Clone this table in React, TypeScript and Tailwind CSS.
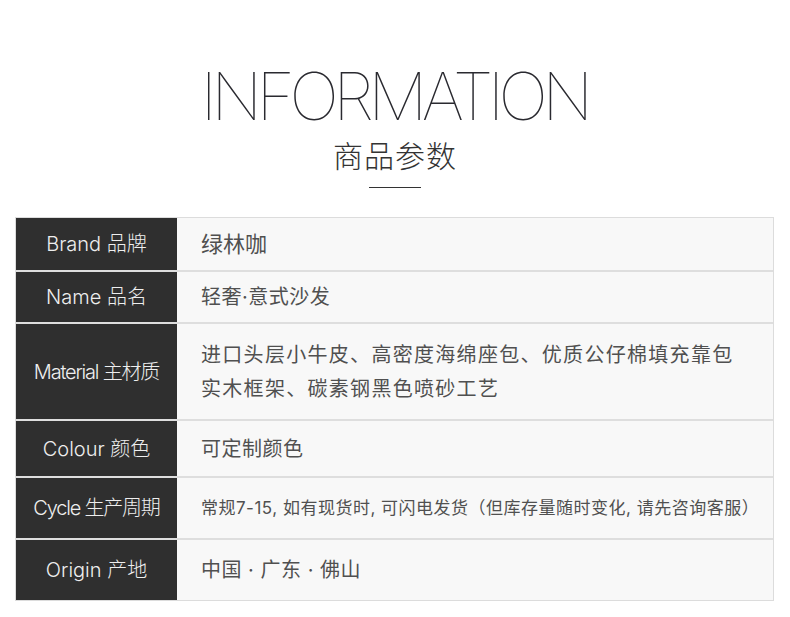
import React from "react";

interface Row {
  label: string;
  value: string[];
  h: string;
  labelClass?: string;
  valueClass?: string;
}

const rows: Row[] = [
  { label: "Brand 品牌", value: ["绿林咖"], h: "h-[52px]", valueClass: "text-[22px] text-[#2e2e2e]" },
  { label: "Name 品名", value: ["轻奢·意式沙发"], h: "h-[52px]" },
  {
    label: "Material 主材质",
    value: ["进口头层小牛皮、高密度海绵座包、优质公仔棉填充靠包", "实木框架、碳素钢黑色喷砂工艺"],
    h: "h-[97px]",
    labelClass: "tracking-[-1.2px]",
    valueClass: "text-[20px] tracking-[1.3px]",
  },
  { label: "Colour 颜色", value: ["可定制颜色"], h: "h-[57px]" },
  {
    label: "Cycle 生产周期",
    value: ["常规7-15, 如有现货时, 可闪电发货（但库存量随时变化, 请先咨询客服）"],
    h: "h-[62px]",
    labelClass: "tracking-[-1.2px]",
    valueClass: "text-[17px] tracking-[0.5px]",
  },
  { label: "Origin 产地", value: ["中国 · 广东 · 佛山"], h: "h-[62px]" },
];

const font = "font-['Inter','Noto_Sans_CJK_SC',sans-serif]";

export default function App() {
  return (
    <div className={`w-[790px] h-[617px] bg-white ${font} overflow-hidden`}>
      <div className="flex flex-col items-center pt-[63px]">
        <h1 className="text-[66px] font-thin leading-none text-[#2a2a30] tracking-[-5.6px] pr-[2px]">INFORMATION</h1>
        <div className="mt-[12px] text-[30px] font-light leading-none text-[#333] tracking-[1px]">商品参数</div>
        <div className="mt-[16px] w-[52px] h-px bg-[#333]" />
      </div>
      <div className="mx-[15px] mt-[29px] w-[759px] border border-[#dcdcdc]">
        {rows.map((r, i) => (
          <div
            key={r.label}
            className={`flex ${r.h} ${i > 0 ? "border-t-2 border-[#dedede]" : ""}`}
          >
            <div
              className={`w-[161px] shrink-0 bg-[#2f2f2f] flex items-center justify-center text-[20px] font-light text-[#eeeeee] ${r.labelClass ?? ""}`}
            >
              {r.label}
            </div>
            <div
              className={`flex-1 bg-[#f8f8f8] flex flex-col justify-center pl-[24px] leading-[34px] text-[#505050] ${r.valueClass ?? "text-[20px] tracking-[0.5px]"}`}
            >
              {r.value.map((v) => (
                <div key={v}>{v}</div>
              ))}
            </div>
          </div>
        ))}
      </div>
    </div>
  );
}
